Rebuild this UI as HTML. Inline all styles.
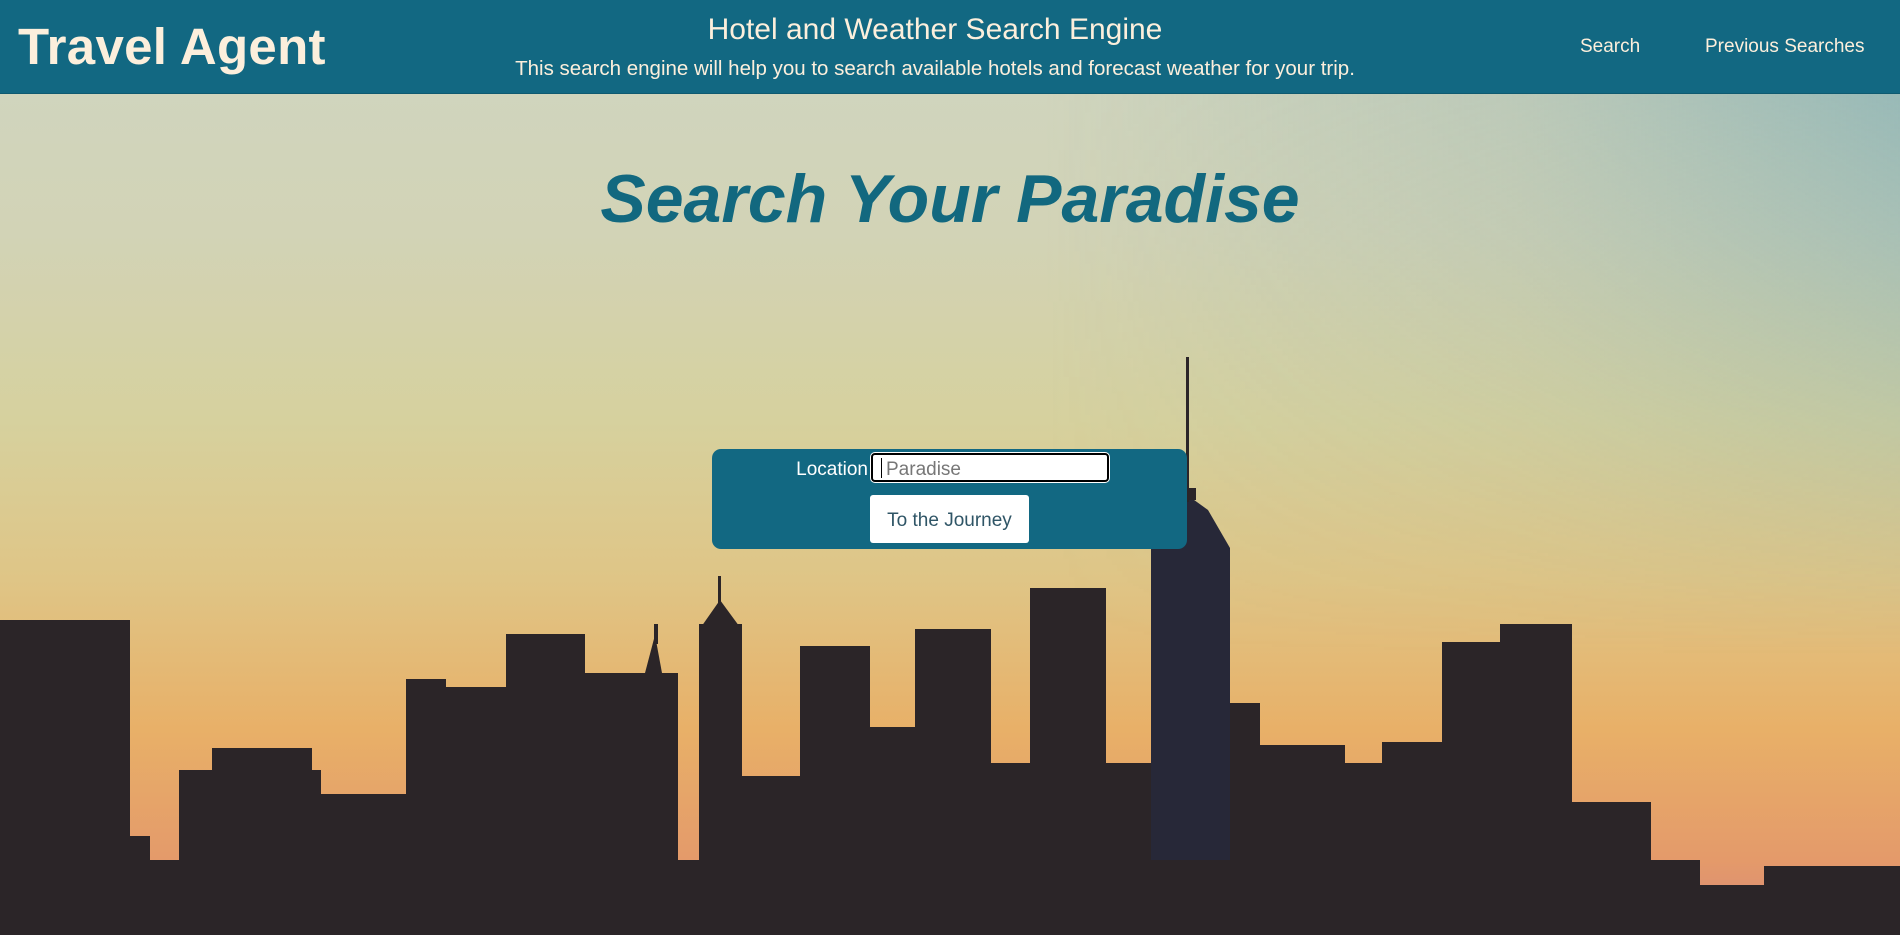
<!DOCTYPE html>
<html><head><meta charset="utf-8"><style>
*{margin:0;padding:0;box-sizing:border-box}
body{width:1900px;height:935px;overflow:hidden;position:relative;font-family:"Liberation Sans","DejaVu Sans",sans-serif;
background:linear-gradient(to bottom,#cfd6c2 0%,#d2d3b6 25%,#d6d19e 45%,#dfc586 62%,#e8b068 78%,#e49a6a 92%,#d88878 100%);}
.tint{position:absolute;inset:0;background:linear-gradient(to left,rgba(120,170,180,.75) 0%,rgba(140,175,175,.35) 20%,rgba(200,210,190,0) 45%);-webkit-mask:linear-gradient(to bottom,#000 0%,rgba(0,0,0,.3) 45%,transparent 70%);mask:linear-gradient(to bottom,#000 0%,rgba(0,0,0,.3) 45%,transparent 70%)}
header{position:absolute;left:0;top:0;width:1900px;height:94px;background:#126882;color:#fcefdc;border-bottom:1px solid #0f5a70}
.logo{position:absolute;left:18px;top:17px;font-size:51px;font-weight:bold;letter-spacing:.3px}
.h1{position:absolute;left:0;width:1870px;text-align:center;top:13px;font-size:30px}
.sub{position:absolute;left:0;width:1870px;text-align:center;top:57px;font-size:20.5px}
.nav{position:absolute;top:36px;font-size:19px}
.title{position:absolute;left:0;width:1900px;text-align:center;top:160px;font-size:68px;font-weight:bold;font-style:italic;color:#12687f}
.box{position:absolute;left:712px;top:449px;width:475px;height:100px;background:#126882;border-radius:9px}
.lbl{position:absolute;left:790px;top:459px;font-size:19px;color:#fff;width:78px;text-align:right}
.inp{position:absolute;left:871px;top:453px;width:238px;height:29px;background:#fff;border:2px solid #000;border-radius:4px;box-shadow:0 0 0 1px #fff;font-size:19px;color:#777;padding:4px 0 0 13px}
.inp:before{content:"";position:absolute;left:8px;top:3px;width:1px;height:20px;background:#000}
.btn{position:absolute;left:870px;top:495px;width:159px;height:48px;background:#fff;border-radius:3px;color:#2f5566;font-size:19px;text-align:center;line-height:52px}
svg{position:absolute;left:0;top:0}
</style></head><body>
<div class="tint"></div>
<svg width="1900" height="935" viewBox="0 0 1900 935" fill="#2b2528">
<rect x="0" y="620" width="130" height="315"/><rect x="130" y="836" width="20" height="100"/>
<rect x="150" y="862" width="40" height="80"/>
<rect x="179" y="770" width="142" height="170"/><rect x="212" y="748" width="100" height="30"/>
<rect x="321" y="794" width="85" height="150"/>
<rect x="406" y="679" width="40" height="260"/><rect x="440" y="687" width="70" height="250"/>
<rect x="506" y="634" width="79" height="300"/>
<rect x="585" y="673" width="93" height="265"/><polygon points="645,673 655,635 662,673"/><rect x="654" y="624" width="4" height="20"/>
<rect x="699" y="624" width="43" height="315"/><polygon points="699,630 720,600 742,630"/><rect x="718" y="576" width="3" height="30"/>
<rect x="742" y="776" width="58" height="160"/>
<rect x="800" y="646" width="70" height="290"/><rect x="870" y="727" width="45" height="210"/>
<rect x="915" y="629" width="76" height="310"/><rect x="991" y="763" width="40" height="175"/>
<rect x="1030" y="588" width="76" height="350"/><rect x="1106" y="763" width="45" height="175"/>
<polygon points="1151,935 1151,548 1172,510 1190,497 1208,510 1230,548 1230,935" fill="#272838"/>
<rect x="1186" y="357" width="3" height="145"/><rect x="1180" y="488" width="16" height="12"/>
<rect x="1230" y="703" width="30" height="235"/>
<rect x="1260" y="745" width="85" height="190"/><rect x="1345" y="763" width="37" height="175"/>
<rect x="1382" y="742" width="60" height="195"/><rect x="1442" y="642" width="58" height="295"/>
<rect x="1500" y="624" width="72" height="315"/><rect x="1572" y="802" width="79" height="135"/>
<rect x="1651" y="909" width="46" height="30"/><rect x="1697" y="885" width="67" height="55"/>
<rect x="1764" y="866" width="137" height="70"/>
<rect x="0" y="860" width="1700" height="75"/>
</svg>
<header>
<div class="logo">Travel Agent</div>
<div class="h1">Hotel and Weather Search Engine</div>
<div class="sub">This search engine will help you to search available hotels and forecast weather for your trip.</div>
<div class="nav" style="left:1580px">Search</div>
<div class="nav" style="left:1705px">Previous Searches</div>
</header>
<div class="title">Search Your Paradise</div>
<div class="box"></div>
<div class="lbl">Location</div>
<div class="inp">Paradise</div>
<div class="btn">To the Journey</div>
</body></html>
